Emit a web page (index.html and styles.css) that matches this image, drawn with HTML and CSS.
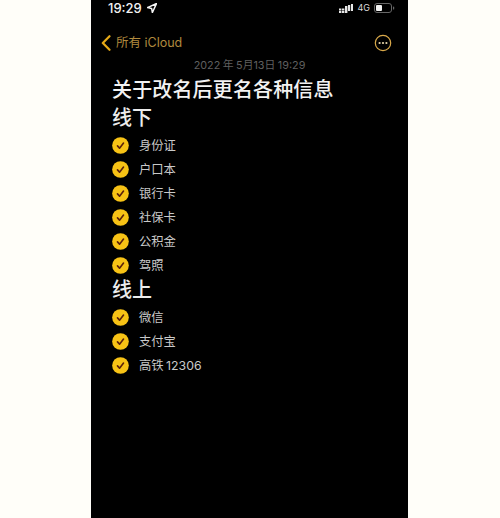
FILE: index.html
```html
<!DOCTYPE html>
<html lang="zh-CN">
<head>
<meta charset="utf-8">
<title>备忘录</title>
<link rel="stylesheet" href="styles.css">
</head>
<body>
<main class="phone">
  <header class="status">
    <div class="status-left">
      <span class="time">19:29</span>
      <svg class="loc" viewBox="0 0 10 10"><path d="M9.5 .5 L.5 4.6 L4.6 5.4 L5.4 9.5 Z" fill="none" stroke="#f4f4f4" stroke-width="1.5" stroke-linejoin="round"/></svg>
    </div>
    <div class="status-right">
      <svg class="signal" viewBox="0 0 14 9"><g fill="#e8e8e8"><rect x="0" y="4.5" width="2.4" height="2"/><rect x="0" y="7" width="2.4" height="2"/><rect x="3" y="4.5" width="2.4" height="2"/><rect x="3" y="7" width="2.4" height="2"/><rect x="6" y="2" width="2.4" height="7"/><rect x="9" y="1" width="2.2" height="6"/><rect x="12" y="0" width="2" height="7"/></g></svg>
      <span class="net">4G</span>
      <svg class="battery" viewBox="0 0 21 10"><rect x=".5" y=".5" width="17" height="9" rx="2.5" fill="none" stroke="#666" stroke-width="1"/><rect x="2" y="2" width="6" height="6" rx="1" fill="#f2f2f2"/><rect x="19" y="3.5" width="1.2" height="3" rx=".6" fill="#666"/></svg>
    </div>
  </header>
  <nav class="nav">
    <div class="back">
      <svg class="chevron" viewBox="0 0 10 16"><path d="M8.5 1.2 L1.8 8 L8.5 14.8" fill="none" stroke="#e6a917" stroke-width="2.2" stroke-linecap="round" stroke-linejoin="round"/></svg>
      <span>所有 iCloud</span>
    </div>
    <svg class="more" viewBox="0 0 18 18"><circle cx="9" cy="9" r="7.7" fill="none" stroke="#d9a94a" stroke-width="1.2"/><g fill="#e8d6aa"><circle cx="5.6" cy="9" r="1.1"/><circle cx="9" cy="9" r="1.1"/><circle cx="12.4" cy="9" r="1.1"/></g></svg>
  </nav>
  <p class="date">2022 年 5月13日 19:29</p>
  <article class="note">
    <h1>关于改名后更名各种信息</h1>
    <h2>线下</h2>
    <ul class="first">
      <li><svg class="check" viewBox="0 0 18 18"><circle cx="9" cy="9" r="8.8" fill="#f7c215"/><path d="M5.8 9.4 L8 11.8 L12.2 6.4" fill="none" stroke="#5a200c" stroke-width="1.7" stroke-linecap="round" stroke-linejoin="round"/></svg><span>身份证</span></li>
      <li><svg class="check" viewBox="0 0 18 18"><circle cx="9" cy="9" r="8.8" fill="#f7c215"/><path d="M5.8 9.4 L8 11.8 L12.2 6.4" fill="none" stroke="#5a200c" stroke-width="1.7" stroke-linecap="round" stroke-linejoin="round"/></svg><span>户口本</span></li>
      <li><svg class="check" viewBox="0 0 18 18"><circle cx="9" cy="9" r="8.8" fill="#f7c215"/><path d="M5.8 9.4 L8 11.8 L12.2 6.4" fill="none" stroke="#5a200c" stroke-width="1.7" stroke-linecap="round" stroke-linejoin="round"/></svg><span>银行卡</span></li>
      <li><svg class="check" viewBox="0 0 18 18"><circle cx="9" cy="9" r="8.8" fill="#f7c215"/><path d="M5.8 9.4 L8 11.8 L12.2 6.4" fill="none" stroke="#5a200c" stroke-width="1.7" stroke-linecap="round" stroke-linejoin="round"/></svg><span>社保卡</span></li>
      <li><svg class="check" viewBox="0 0 18 18"><circle cx="9" cy="9" r="8.8" fill="#f7c215"/><path d="M5.8 9.4 L8 11.8 L12.2 6.4" fill="none" stroke="#5a200c" stroke-width="1.7" stroke-linecap="round" stroke-linejoin="round"/></svg><span>公积金</span></li>
      <li><svg class="check" viewBox="0 0 18 18"><circle cx="9" cy="9" r="8.8" fill="#f7c215"/><path d="M5.8 9.4 L8 11.8 L12.2 6.4" fill="none" stroke="#5a200c" stroke-width="1.7" stroke-linecap="round" stroke-linejoin="round"/></svg><span>驾照</span></li>
    </ul>
    <h2 class="online">线上</h2>
    <ul>
      <li><svg class="check" viewBox="0 0 18 18"><circle cx="9" cy="9" r="8.8" fill="#f7c215"/><path d="M5.8 9.4 L8 11.8 L12.2 6.4" fill="none" stroke="#5a200c" stroke-width="1.7" stroke-linecap="round" stroke-linejoin="round"/></svg><span>微信</span></li>
      <li><svg class="check" viewBox="0 0 18 18"><circle cx="9" cy="9" r="8.8" fill="#f7c215"/><path d="M5.8 9.4 L8 11.8 L12.2 6.4" fill="none" stroke="#5a200c" stroke-width="1.7" stroke-linecap="round" stroke-linejoin="round"/></svg><span>支付宝</span></li>
      <li><svg class="check" viewBox="0 0 18 18"><circle cx="9" cy="9" r="8.8" fill="#f7c215"/><path d="M5.8 9.4 L8 11.8 L12.2 6.4" fill="none" stroke="#5a200c" stroke-width="1.7" stroke-linecap="round" stroke-linejoin="round"/></svg><span>高铁 12306</span></li>
    </ul>
  </article>
</main>
</body>
</html>
```
FILE: styles.css
```css
* { box-sizing: border-box; }
html, body { margin: 0; height: 100%; }
body {
  background: #fffef9;
  display: flex;
  justify-content: flex-start;
  padding-left: 91px;
  overflow: hidden;
  font-family: "Inter", "Noto Sans CJK SC", sans-serif;
}
.phone {
  width: 317px;
  height: 518px;
  background: #000;
  color: #e6e6e6;
  flex: none;
}
.status {
  height: 16px;
  padding: 0 13px 0 17px;
  display: flex;
  justify-content: space-between;
  align-items: center;
}
.status-left { display: flex; align-items: center; gap: 5px; }
.time { font-size: 13px; font-weight: 500; color: #f2f2f2; line-height: 16px; }
.loc { width: 10px; height: 10px; }
.status-right { display: flex; align-items: center; gap: 4px; }
.signal { width: 14px; height: 9px; }
.net { font-size: 9px; color: #dcdcdc; line-height: 16px; }
.battery { width: 21px; height: 10px; }
.nav {
  margin-top: 18px;
  height: 18px;
  padding: 0 16px 0 10px;
  display: flex;
  justify-content: space-between;
  align-items: center;
}
.back {
  display: flex;
  align-items: center;
  gap: 5px;
  font-size: 12.5px;
  color: #b08a3e;
  line-height: 18px;
}
.chevron { width: 10px; height: 16px; }
.more { width: 18px; height: 18px; }
.date {
  margin: 6px 0 0;
  font-size: 10.8px;
  word-spacing: -0.5px;
  line-height: 16px;
  color: #5f5f5f;
  text-align: center;
}
.note { padding: 0 21px; }
h1, h2 {
  margin: 0;
  font-size: 20px;
  font-weight: 500;
  color: #f2f2f2;
  line-height: 28px;
}
h1 { margin-top: 2px; letter-spacing: 0.15px; }
h2 { color: #ececec; }
.online { margin: -1px 0 1px; }
ul { list-style: none; margin: 0; padding: 0; }
.first { margin-top: 1px; }
li {
  height: 24px;
  display: flex;
  align-items: center;
  gap: 10px;
  font-size: 12.3px;
  word-spacing: -1px;
  color: #c9c9c9;
}
li span { padding-bottom: 1px; }
.check { width: 17px; height: 17px; flex: none; }
```
